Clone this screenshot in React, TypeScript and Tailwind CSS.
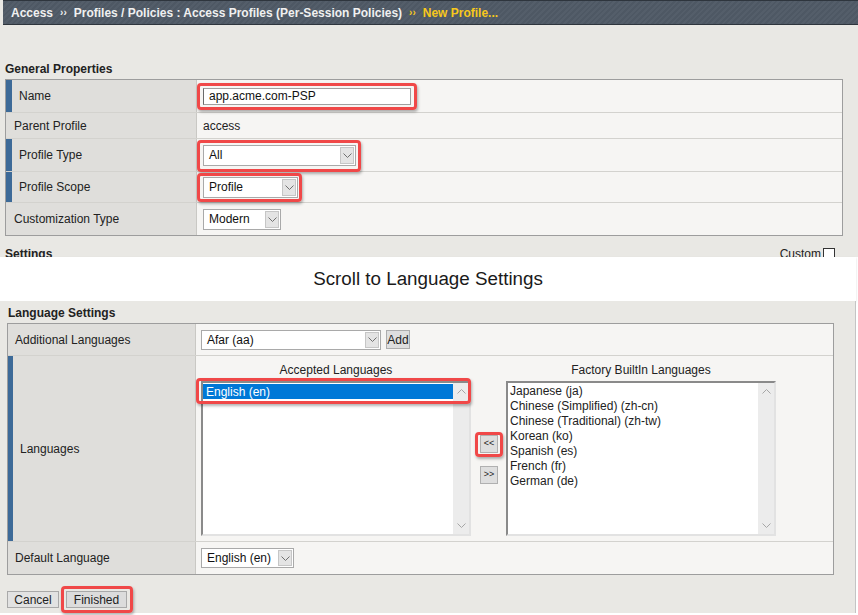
import React from 'react'

const font = "font-['Liberation_Sans',Arial,sans-serif]"

function Chevron({ up, light }: { up?: boolean; light?: boolean }) {
  return (
    <svg width="9" height="5" viewBox="0 0 9 5" className={up ? 'rotate-180' : ''}>
      <path d="M0.5 0.5 L4.5 4.5 L8.5 0.5" fill="none" stroke={light ? '#a6a6a6' : '#707070'} strokeWidth="1" />
    </svg>
  )
}

// red call-out box drawn over a field
function Highlight({ className }: { className: string }) {
  return (
    <div
      className={`pointer-events-none absolute rounded-[4px] border-[3px] border-[#f04848] shadow-[1px_2px_3px_rgba(0,0,0,0.3)] ${className}`}
    />
  )
}

function Select({ value, w, h }: { value: string; w: string; h: string }) {
  return (
    <div className={`flex ${w} ${h} border border-[#a9a9a9] bg-white`}>
      <div className="flex flex-1 items-center pl-[5px] text-[12px] text-[#111]">{value}</div>
      <div className="m-[1px] flex w-[14px] items-center justify-center border border-[#c6c6c6] bg-[#e4e4e4]">
        <Chevron />
      </div>
    </div>
  )
}

function Row({
  label,
  accent,
  h,
  lw,
  pl,
  vpl,
  last,
  children,
}: {
  label: string
  accent?: string
  h: string
  lw: string
  pl: string
  vpl: string
  last?: boolean
  children?: React.ReactNode
}) {
  return (
    <div className={`flex ${h} ${last ? '' : 'border-b border-[#d3d2ce]'}`}>
      <div className={`flex ${lw} shrink-0 items-center border-r border-[#c9c8c4] bg-[#dfdedb] ${accent ?? ''} ${pl}`}>
        {label}
      </div>
      <div className={`flex flex-1 items-center bg-[#f6f5f3] ${vpl}`}>{children}</div>
    </div>
  )
}

function ListBox({ children }: { children?: React.ReactNode }) {
  return (
    <div className="flex h-[155px] w-[270px] border-2 border-t-[#8a8a8a] border-l-[#8a8a8a] border-r-[#e2e2e2] border-b-[#e2e2e2] bg-white">
      <div className="flex-1 pt-[1px]">{children}</div>
      <div className="flex w-[16px] flex-col items-center justify-between bg-[#ececec] py-[6px]">
        <Chevron up light />
        <Chevron light />
      </div>
    </div>
  )
}

const factory = [
  'Japanese (ja)',
  'Chinese (Simplified) (zh-cn)',
  'Chinese (Traditional) (zh-tw)',
  'Korean (ko)',
  'Spanish (es)',
  'French (fr)',
  'German (de)',
]

function SmallBtn({ label }: { label: string }) {
  return (
    <div className="flex h-[18px] w-[18px] items-center justify-center border border-[#b0b0b0] bg-[#dedede] text-[9px] text-[#222]">
      {label}
    </div>
  )
}

export default function App() {
  return (
    <div className={`relative h-[615px] w-[858px] overflow-hidden bg-white text-[12px] text-[#222] ${font}`}>
      {/* upper screenshot */}
      <div className="h-[257px] overflow-hidden bg-[#e9e8e4]">
        <div className="ml-[3px] flex h-[25px] items-center border-y border-[#2e353d] bg-[repeating-linear-gradient(135deg,#545e6a_0px,#545e6a_2px,#4e5864_2px,#4e5864_4px)] pl-[8px] text-[12px] font-bold text-[#f0f0f0]">
          <span>Access</span>
          <span className="mx-[7px] text-[10px]">››</span>
          <span>Profiles / Policies : Access Profiles (Per-Session Policies)</span>
          <span className="mx-[7px] text-[10px] text-[#f7c81c]">››</span>
          <span className="text-[#f7c81c]">New Profile...</span>
        </div>

        <div className="pl-[5px] pt-[37px] font-bold leading-[14px]">General Properties</div>

        <div className="ml-[5px] mt-[3px] w-[838px] border border-[#9d9d9d]">
          <Row label="Name" accent="border-l-[6px] border-l-[#3d6a98]" h="h-[33px]" lw="w-[191px]" pl="pl-[7px]" vpl="pl-[6px]">
            <div className="relative">
              <div className="flex h-[17px] w-[208px] items-center border border-[#a0a0a0] border-l-[#6a6a6a] bg-white pl-[5px] text-[#111]">
                app.acme.com-PSP
              </div>
              <Highlight className="-bottom-[5px] -left-[6px] -right-[6px] -top-[5px]" />
            </div>
          </Row>
          <Row label="Parent Profile" h="h-[26px]" lw="w-[191px]" pl="pl-[8px]" vpl="pl-[6px]">
            access
          </Row>
          <Row label="Profile Type" accent="border-l-[6px] border-l-[#3d6a98]" h="h-[33px]" lw="w-[191px]" pl="pl-[7px]" vpl="pl-[6px]">
            <div className="relative">
              <Select value="All" w="w-[153px]" h="h-[21px]" />
              <Highlight className="-bottom-[6px] -left-[6px] -right-[5px] -top-[5px]" />
            </div>
          </Row>
          <Row label="Profile Scope" accent="border-l-[6px] border-l-[#3d6a98]" h="h-[31px]" lw="w-[191px]" pl="pl-[7px]" vpl="pl-[6px]">
            <div className="relative">
              <Select value="Profile" w="w-[95px]" h="h-[21px]" />
              <Highlight className="-bottom-[4px] -left-[6px] -right-[4px] -top-[4px]" />
            </div>
          </Row>
          <Row label="Customization Type" h="h-[32px]" lw="w-[191px]" pl="pl-[8px]" vpl="pl-[6px]" last>
            <Select value="Modern" w="w-[78px]" h="h-[21px]" />
          </Row>
        </div>

        <div className="mt-[11px] flex items-center justify-between pl-[5px] pr-[23px] leading-[14px]">
          <span className="font-bold">Settings</span>
          <div className="flex items-center gap-[2px]">
            <span>Custom</span>
            <div className="h-[12px] w-[12px] border border-[#333] bg-white" />
          </div>
        </div>
      </div>

      {/* caption band */}
      <div className="flex h-[44px] w-[856px] items-center justify-center bg-white text-[18.8px] text-[#1a1a1a] shadow-[0_1px_2px_rgba(0,0,0,0.15)]">
        Scroll to Language Settings
      </div>

      {/* lower screenshot */}
      <div className="h-[312px] w-[856px] border-r border-[#c4c4c4] bg-[#e9e8e4]">
        <div className="pl-[8px] pt-[5px] font-bold leading-[14px]">Language Settings</div>

        <div className="ml-[7px] mt-[3px] w-[827px] border border-[#9d9d9d]">
          <Row label="Additional Languages" h="h-[32px]" lw="w-[188px]" pl="pl-[7px]" vpl="pl-[5px]">
            <Select value="Afar (aa)" w="w-[180px]" h="h-[20px]" />
            <div className="ml-[5px] flex h-[19px] w-[24px] items-center justify-center border border-[#adadad] bg-[#dedede]">
              Add
            </div>
          </Row>

          <div className="flex h-[186px] border-b border-[#d3d2ce]">
            <div className="flex w-[188px] shrink-0 items-center border-r border-[#c9c8c4] border-l-[5px] border-l-[#3d6a98] bg-[#dfdedb] pl-[7px]">
              Languages
            </div>
            <div className="flex-1 bg-[#f6f5f3] pl-[5px] pt-[7px]">
              <div className="grid grid-cols-[270px_35px_270px] gap-y-[4px]">
                <div className="text-center leading-[14px]">Accepted Languages</div>
                <div />
                <div className="text-center leading-[14px]">Factory BuiltIn Languages</div>

                <div className="relative">
                  <ListBox>
                    <div className="flex h-[15px] items-center bg-[#0078d7] pl-[3px] text-white">English (en)</div>
                  </ListBox>
                  <Highlight className="-left-[5px] -top-[3px] h-[26px] w-[275px]" />
                </div>

                <div className="flex flex-col items-center pl-[1px] pt-[54px]">
                  <div className="relative">
                    <SmallBtn label="<<" />
                    <Highlight className="-bottom-[4px] -left-[5px] -right-[5px] -top-[3px]" />
                  </div>
                  <div className="mt-[13px]">
                    <SmallBtn label=">>" />
                  </div>
                </div>

                <ListBox>
                  <div className="pl-[2px]">
                    {factory.map((f) => (
                      <div key={f} className="h-[15px] leading-[14px]">
                        {f}
                      </div>
                    ))}
                  </div>
                </ListBox>
              </div>
            </div>
          </div>

          <Row label="Default Language" h="h-[32px]" lw="w-[188px]" pl="pl-[7px]" vpl="pl-[5px]" last>
            <Select value="English (en)" w="w-[93px]" h="h-[20px]" />
          </Row>
        </div>

        <div className="ml-[7px] mt-[16px] flex gap-[7px]">
          <div className="flex h-[17px] w-[52px] items-center justify-center border border-[#a9a9a9] bg-[#e2e2e2]">
            Cancel
          </div>
          <div className="relative">
            <div className="flex h-[17px] w-[61px] items-center justify-center border border-[#a9a9a9] bg-[#dcdcdc]">
              Finished
            </div>
            <Highlight className="-bottom-[5px] -left-[5px] -right-[6px] -top-[5px]" />
          </div>
        </div>
      </div>
    </div>
  )
}
